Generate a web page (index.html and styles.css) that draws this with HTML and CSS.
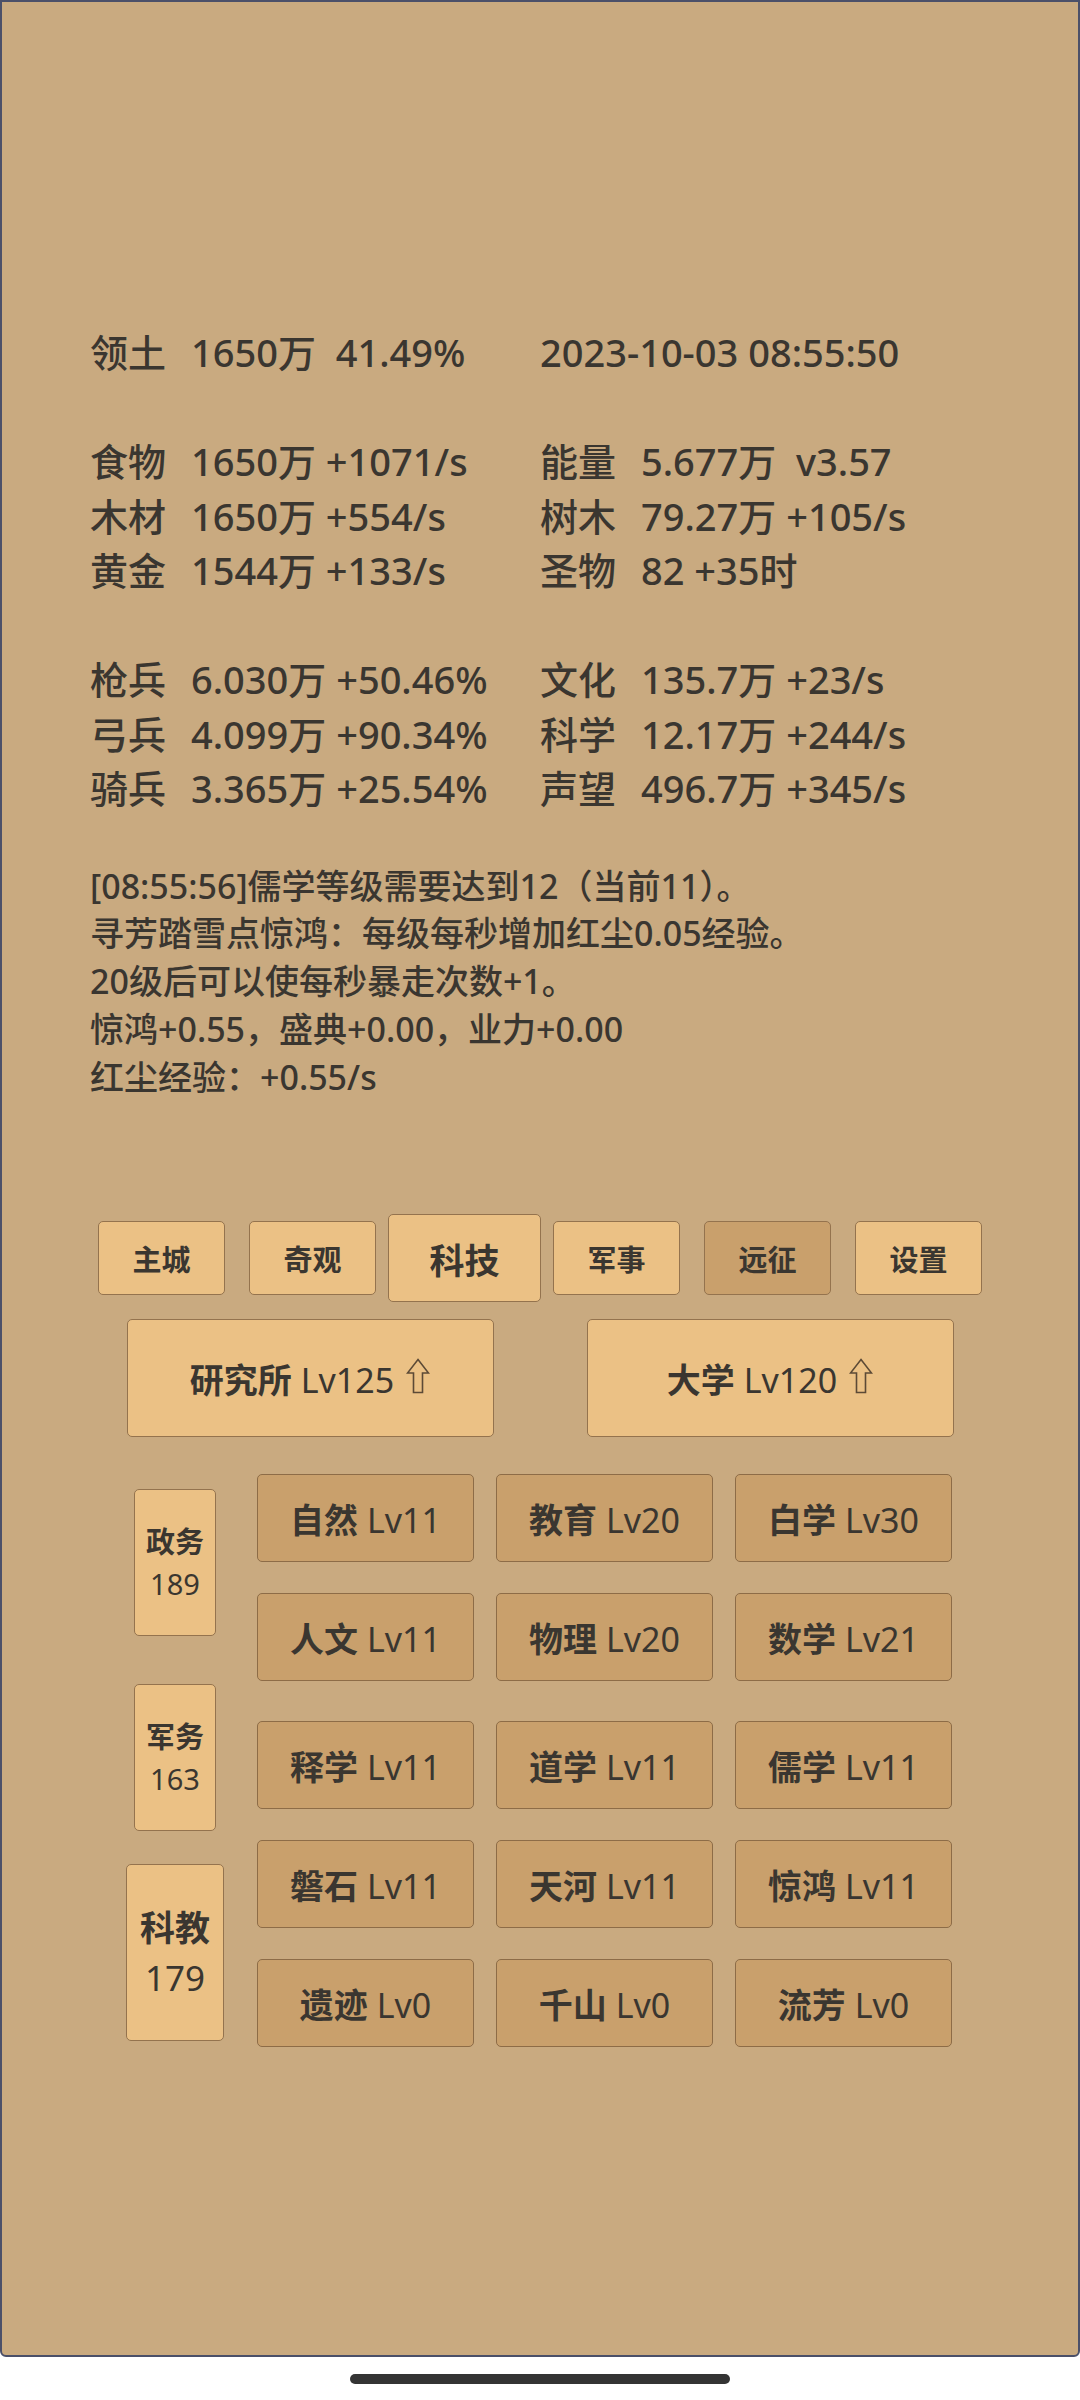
FILE: index.html
```html
<!DOCTYPE html>
<html lang="zh-CN">
<head>
  <meta charset="UTF-8">
  <meta name="viewport" content="width=device-width, initial-scale=1.0">
  <title>科技</title>
  <link rel="stylesheet" href="styles.css">
</head>
<body>
  <div class="screen">
    <section class="stats">
      <div class="stat-row">
        <div class="cell"><span class="k">领土</span><span class="v">1650万  41.49%</span></div>
        <div class="cell"><span class="v">2023-10-03 08:55:50</span></div>
      </div>
      <div class="stat-row"></div>
      <div class="stat-row">
        <div class="cell"><span class="k">食物</span><span class="v">1650万 +1071/s</span></div>
        <div class="cell"><span class="k">能量</span><span class="v">5.677万  v3.57</span></div>
      </div>
      <div class="stat-row">
        <div class="cell"><span class="k">木材</span><span class="v">1650万 +554/s</span></div>
        <div class="cell"><span class="k">树木</span><span class="v">79.27万 +105/s</span></div>
      </div>
      <div class="stat-row">
        <div class="cell"><span class="k">黄金</span><span class="v">1544万 +133/s</span></div>
        <div class="cell"><span class="k">圣物</span><span class="v">82 +35时</span></div>
      </div>
      <div class="stat-row"></div>
      <div class="stat-row">
        <div class="cell"><span class="k">枪兵</span><span class="v">6.030万 +50.46%</span></div>
        <div class="cell"><span class="k">文化</span><span class="v">135.7万 +23/s</span></div>
      </div>
      <div class="stat-row">
        <div class="cell"><span class="k">弓兵</span><span class="v">4.099万 +90.34%</span></div>
        <div class="cell"><span class="k">科学</span><span class="v">12.17万 +244/s</span></div>
      </div>
      <div class="stat-row">
        <div class="cell"><span class="k">骑兵</span><span class="v">3.365万 +25.54%</span></div>
        <div class="cell"><span class="k">声望</span><span class="v">496.7万 +345/s</span></div>
      </div>
    </section>

    <section class="log">
      <p>[08:55:56]儒学等级需要达到12（当前11）。</p>
      <p>寻芳踏雪点惊鸿：每级每秒增加红尘0.05经验。</p>
      <p>20级后可以使每秒暴走次数+1。</p>
      <p>惊鸿+0.55，盛典+0.00，业力+0.00</p>
      <p>红尘经验：+0.55/s</p>
    </section>

    <nav class="tabs">
      <button class="tab">主城</button>
      <button class="tab">奇观</button>
      <button class="tab active">科技</button>
      <button class="tab">军事</button>
      <button class="tab dim">远征</button>
      <button class="tab">设置</button>
    </nav>

    <div class="buildings">
      <button class="building"><span><b>研究所</b> Lv125</span>
        <svg class="up" width="24" height="36" viewBox="0 0 24 36"><path d="M12 1.5 L22.5 15 L16.5 15 L16.5 34.5 L7.5 34.5 L7.5 15 L1.5 15 Z" fill="none" stroke="#5c4a36" stroke-width="1.6" stroke-linejoin="miter"/></svg>
      </button>
      <button class="building"><span><b>大学</b> Lv120</span>
        <svg class="up" width="24" height="36" viewBox="0 0 24 36"><path d="M12 1.5 L22.5 15 L16.5 15 L16.5 34.5 L7.5 34.5 L7.5 15 L1.5 15 Z" fill="none" stroke="#5c4a36" stroke-width="1.6" stroke-linejoin="miter"/></svg>
      </button>
    </div>

    <div class="research">
      <div class="sides">
        <button class="side"><b>政务</b><br>189</button>
        <button class="side second"><b>军务</b><br>163</button>
        <button class="side active"><b>科教</b><br>179</button>
      </div>
      <div class="subjects">
        <div class="subject-row">
          <button class="subject"><b>自然</b> Lv11</button>
          <button class="subject"><b>教育</b> Lv20</button>
          <button class="subject"><b>白学</b> Lv30</button>
        </div>
        <div class="subject-row">
          <button class="subject"><b>人文</b> Lv11</button>
          <button class="subject"><b>物理</b> Lv20</button>
          <button class="subject"><b>数学</b> Lv21</button>
        </div>
        <div class="subject-row group">
          <button class="subject"><b>释学</b> Lv11</button>
          <button class="subject"><b>道学</b> Lv11</button>
          <button class="subject"><b>儒学</b> Lv11</button>
        </div>
        <div class="subject-row">
          <button class="subject"><b>磐石</b> Lv11</button>
          <button class="subject"><b>天河</b> Lv11</button>
          <button class="subject"><b>惊鸿</b> Lv11</button>
        </div>
        <div class="subject-row">
          <button class="subject"><b>遗迹</b> Lv0</button>
          <button class="subject"><b>千山</b> Lv0</button>
          <button class="subject"><b>流芳</b> Lv0</button>
        </div>
      </div>
    </div>
  </div>
  <div class="home">
    <span class="home-bar"></span>
  </div>
</body>
</html>
```

FILE: styles.css
```css
body {
  margin: 0;
  width: 1080px;
  background: #fff;
  font-family: "Noto Sans", "Noto Sans CJK SC", sans-serif;
  font-weight: 500;
  color: #3a3630;
}

.screen {
  box-sizing: border-box;
  width: 1080px;
  height: 2357px;
  border: 2px solid #4b5069;
  border-radius: 0 0 6px 6px;
  background: #c9aa80;
  overflow: hidden;
}

/* resource table */
.stats {
  margin-top: 323px;
  padding-left: 88px;
  font-size: 38px;
  line-height: 54.5px;
}

.stat-row {
  display: grid;
  grid-template-columns: 450px 1fr;
  height: 54.5px;
}

.cell {
  white-space: pre;
}

.k {
  display: inline-block;
  width: 101px;
}

/* message log */
.log {
  margin-top: 47px;
  padding-left: 88px;
  font-size: 34px;
  line-height: 47.8px;
}

.log p {
  margin: 0;
  white-space: pre;
}

button {
  font-family: inherit;
  font-weight: 400;
  color: inherit;
  padding: 0;
  cursor: pointer;
}

button b {
  font-weight: 600;
}

/* top tabs */
.tabs {
  display: flex;
  justify-content: center;
  align-items: center;
  height: 88px;
  margin-top: 113px;
}

.tab {
  box-sizing: border-box;
  width: 127px;
  height: 74px;
  margin: 0 12px;
  background: #ebc185;
  border: 1.5px solid #94734e;
  border-radius: 5px;
  font-size: 29px;
  font-weight: 600;
}

.tab.active {
  width: 153px;
  height: 88px;
  margin: 0;
  font-size: 35px;
}

.tab.dim {
  background: #c9a06c;
}

/* building buttons */
.buildings {
  display: flex;
  justify-content: center;
  gap: 93px;
  margin-top: 17px;
}

.building {
  box-sizing: border-box;
  display: flex;
  align-items: center;
  justify-content: center;
  gap: 12px;
  width: 367px;
  height: 118px;
  background: #ebc185;
  border: 1.5px solid #94734e;
  border-radius: 5px;
  font-size: 34px;
}

.up {
  margin-top: -4px;
}

/* research grid */
.research {
  display: flex;
  margin-top: 37px;
  padding-left: 132px;
}

.sides {
  display: flex;
  flex-direction: column;
  align-items: center;
  width: 82px;
  padding-top: 15px;
}

.side {
  box-sizing: border-box;
  width: 82px;
  height: 147px;
  background: #ebc185;
  border: 1.5px solid #94734e;
  border-radius: 5px;
  font-size: 29px;
  line-height: 42px;
}

.side.second {
  margin-top: 48px;
}

.side.active {
  width: 98px;
  height: 177px;
  margin-top: 33px;
  font-size: 35px;
  line-height: 50px;
}

.subjects {
  margin-left: 41px;
  display: flex;
  flex-direction: column;
  gap: 31px;
}

.subject-row {
  display: flex;
  gap: 22px;
}

.subject-row.group {
  margin-top: 9px;
}

.subject {
  box-sizing: border-box;
  width: 217px;
  height: 88px;
  background: #c9a06c;
  border: 1.5px solid #8d6c47;
  border-radius: 5px;
  font-size: 34px;
}

/* gesture bar */
.home {
  display: flex;
  justify-content: center;
  padding-top: 17px;
}

.home-bar {
  width: 380px;
  height: 10px;
  border-radius: 5px;
  background: #343434;
}
```
